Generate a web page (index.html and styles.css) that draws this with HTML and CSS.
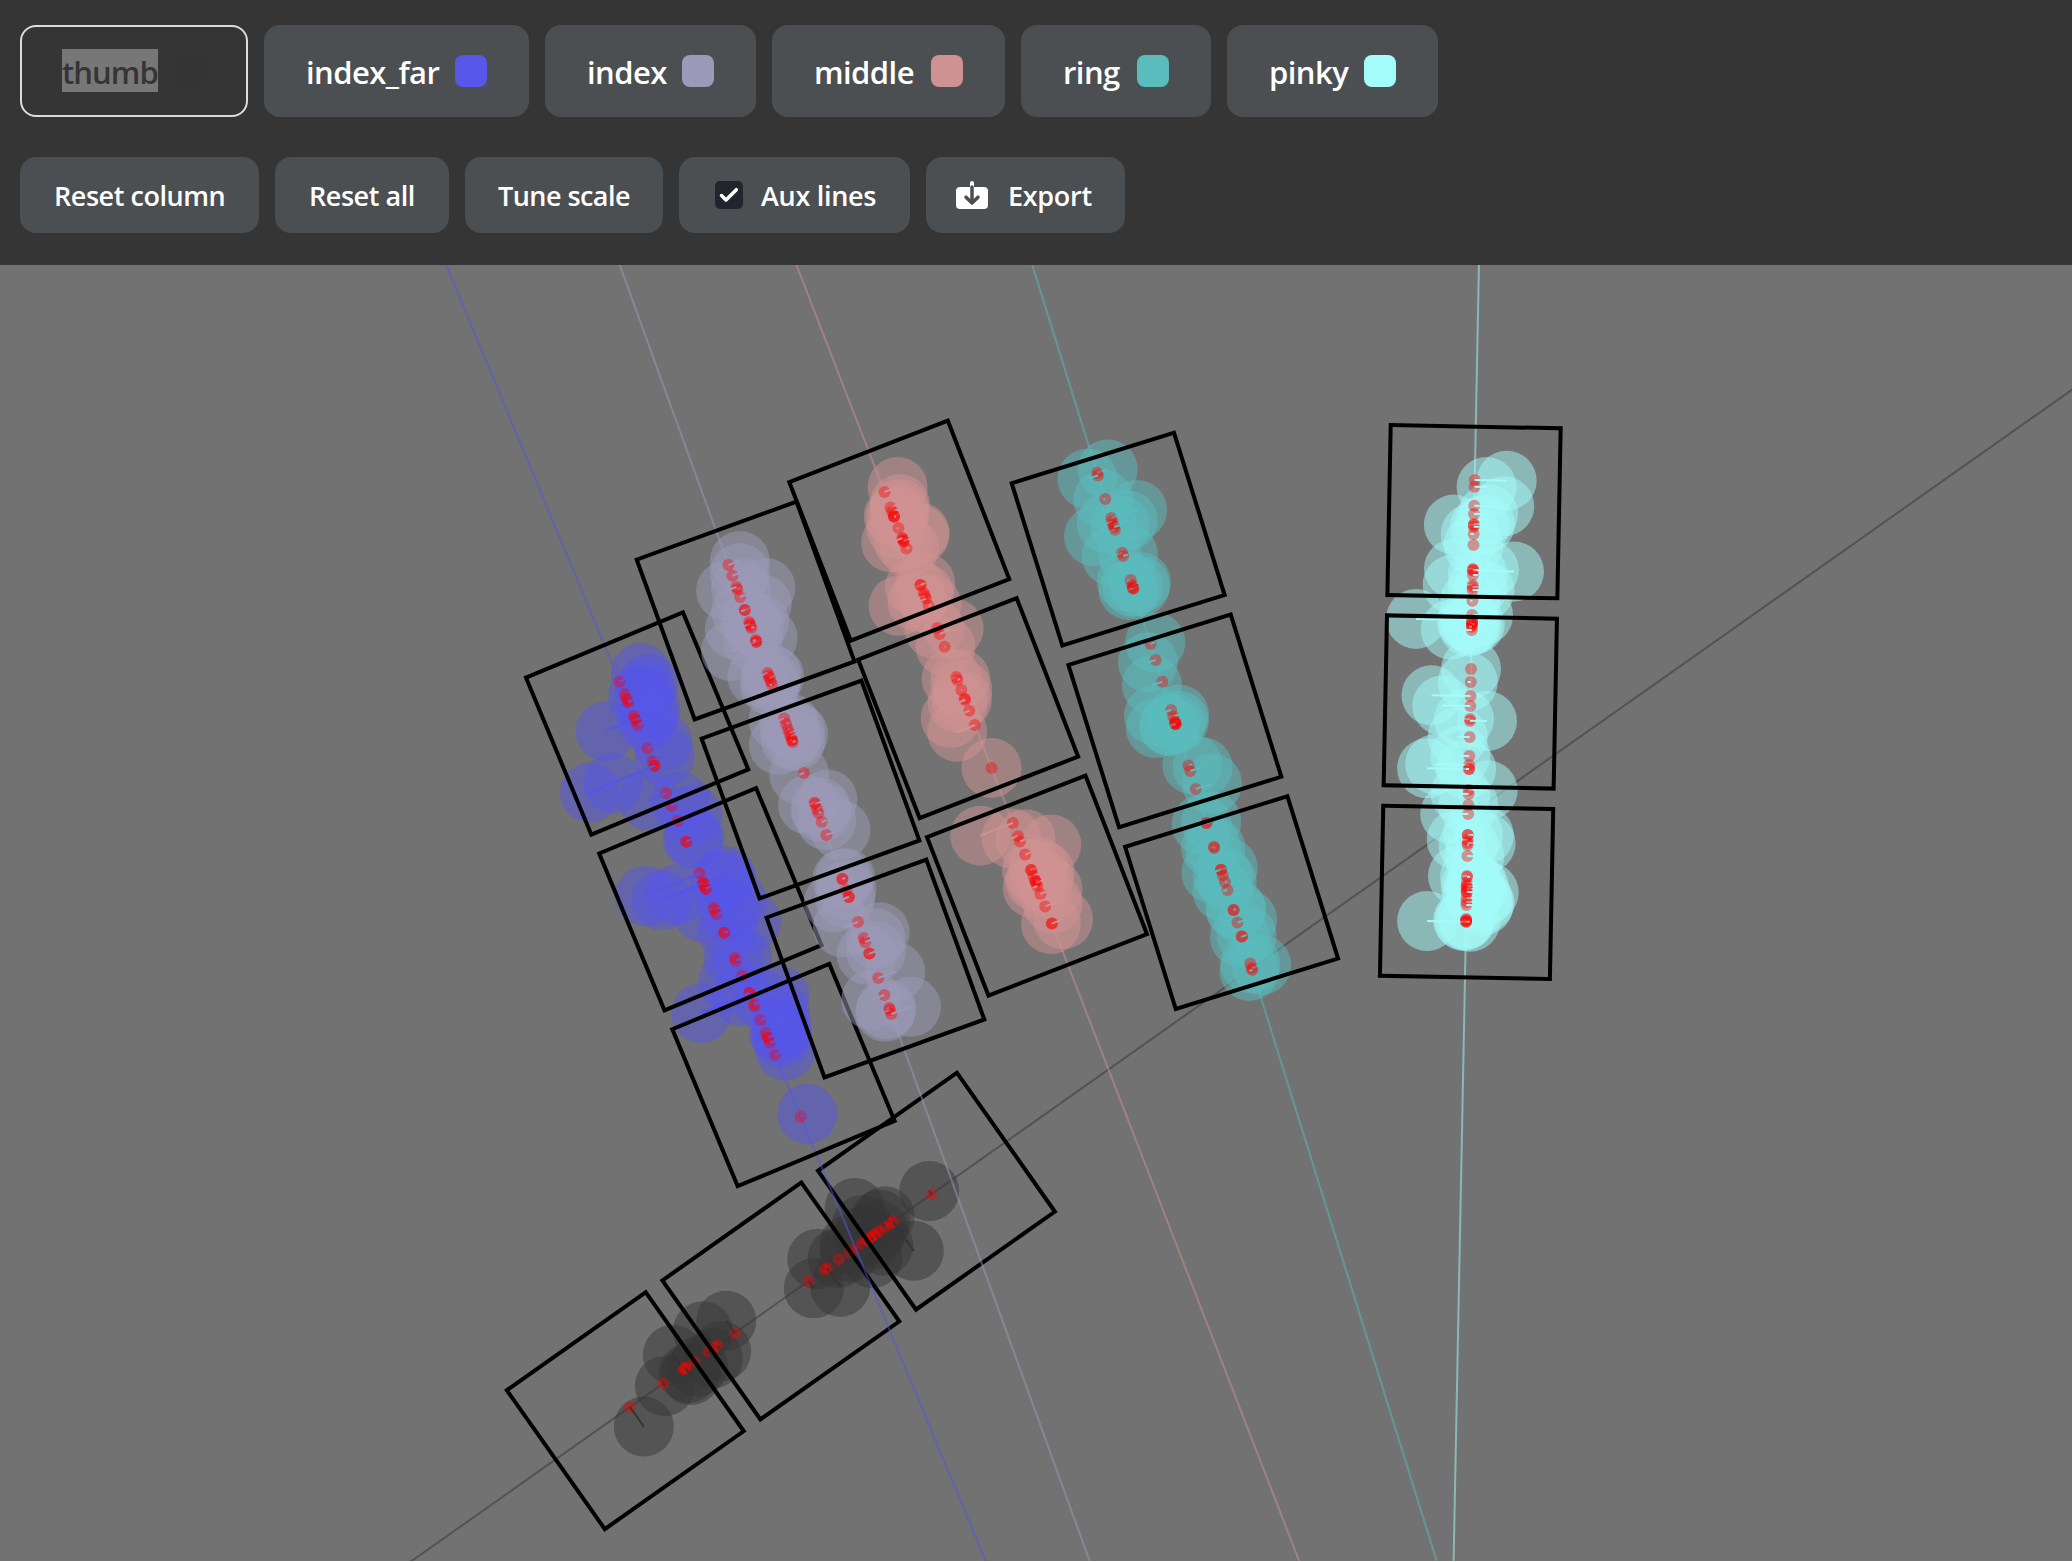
FILE: index.html
```html
<!DOCTYPE html>
<html lang="en">
<head>
<meta charset="utf-8">
<title>Finger columns</title>
<link rel="stylesheet" href="styles.css">
</head>
<body>
<header class="toolbar">
  <nav class="row fingers">
    <button class="finger thumb active"><span class="label">thumb</span><span class="swatch"></span></button>
    <button class="finger index-far"><span class="label">index_far</span><span class="swatch"></span></button>
    <button class="finger index"><span class="label">index</span><span class="swatch"></span></button>
    <button class="finger middle"><span class="label">middle</span><span class="swatch"></span></button>
    <button class="finger ring"><span class="label">ring</span><span class="swatch"></span></button>
    <button class="finger pinky"><span class="label">pinky</span><span class="swatch"></span></button>
  </nav>
  <div class="row actions">
    <button class="action reset-column"><span class="label">Reset column</span></button>
    <button class="action reset-all"><span class="label">Reset all</span></button>
    <button class="action tune"><span class="label">Tune scale</span></button>
    <button class="action aux"><svg class="check" viewBox="0 0 28 28"><rect width="28" height="28" rx="5"/><path d="M6.500 14.500 11 19 21.300 8.700"/></svg><span class="label">Aux lines</span></button>
    <button class="action export"><svg class="export-icon" viewBox="0 0 32 28"><rect class="tray" y="6" width="32" height="22" rx="4"/><path class="stem" d="M16 2V6"/><path class="arrow" d="M16 6V22M10 16.200L16 22 22 16.200"/></svg><span class="label">Export</span></button>
  </div>
</header>
<main class="board"><svg id="canvas" viewBox="0 265 2072 1296"></svg></main>
<script src="columns.js"></script>
</body>
</html>
```
FILE: styles.css
```css
* { box-sizing: border-box; }
body {
  margin: 0;
  background: #fff;
  font-family: "Open Sans", "Noto Sans", sans-serif;
  color: #fff;
}
.toolbar {
  display: flex;
  flex-direction: column;
  gap: 40px;
  height: 265px;
  padding: 25px 20px 0;
  background: #353535;
}
.row { display: flex; gap: 16px; }
button {
  display: flex;
  align-items: center;
  flex: none;
  border: 0;
  border-radius: 16px;
  background: #4b4f52;
  color: #fff;
  font-family: inherit;
  font-weight: 600;
  white-space: nowrap;
}
.finger {
  height: 92px;
  padding: 0 42px;
  justify-content: space-between;
  font-size: 31px;
  letter-spacing: -.55px;
}
.finger .label { line-height: 43px; padding-top: 3px; }
.swatch { width: 32px; height: 32px; border-radius: 8px; }
.thumb { width: 228px; letter-spacing: -.95px; }
.index-far { width: 265px; }
.index { width: 211px; }
.middle { width: 233px; }
.ring { width: 190px; }
.pinky { width: 211px; }
.active { border: 2px solid #dcdcdc; background: #353535; padding: 0 40px; color: #353535; }
.finger.active .label { background: #777; line-height: 39px; padding-top: 4px; margin-bottom: 1px; }
.thumb .swatch { background: #343434; }
.index-far .swatch { background: #5656e8; }
.index .swatch { background: #9c9ab8; }
.middle .swatch { background: #cf9292; }
.ring .swatch { background: #5abcbd; }
.pinky .swatch { background: #a4fcfa; }
.action { height: 76px; padding: 0 34px; font-size: 27px; letter-spacing: -.45px; }
.reset-column { width: 239px; }
.reset-all { width: 174px; }
.tune { width: 198px; letter-spacing: -.55px; padding-left: 33px; }
.aux { width: 231px; padding: 0 0 0 36px; gap: 18px; letter-spacing: -.3px; }
.export { width: 199px; padding: 0 0 0 30px; gap: 20px; letter-spacing: -.3px; }
.check { width: 28px; height: 28px; }
.check rect { fill: #22252d; }
.check path { fill: none; stroke: #fff; stroke-width: 3.500; stroke-linecap: round; stroke-linejoin: round; }
.export-icon { width: 32px; height: 28px; overflow: visible; }
.tray { fill: #fff; }
.stem { stroke: #fff; stroke-width: 4; stroke-linecap: round; }
.arrow { fill: none; stroke: #4b4f52; stroke-width: 3.500; stroke-linecap: round; stroke-linejoin: round; }
.board { background: #727272; height: 1296px; }
#canvas { display: block; width: 2072px; height: 1296px; }
.axis { stroke-width: 2; opacity: .5; }
.touch { opacity: .5; }
.dot { fill: #f00; opacity: .4; }
.offset { stroke-width: 2; }
.key { fill: none; stroke: #000; stroke-width: 4; }
```
FILE: columns.js
```js
// Each column: a point on its axis, its rotation in degrees, the corner of its
// first key, and touches as [y of the point on the axis, offset across the axis].
const KEY = 170, PITCH = 190.4, RADIUS = 30;
const columns = [
  { color: '#353535', at: [931.5, 1194.3], angle: 54.8, corner: [956.9, 1072.7], touches: [
    [1194.3,-4],[1235,-33],[1223.6,-9],[1221.4,36],[1237.4,-15],[1227,-9],[1231.4,-2],[1234,14],[1243.4,18],
    [1250,-6],[1259.6,-2],[1269.6,-13],[1281,9],[1268,23],[1240.4,-5],[1252,0],[1237,3],[1333,-15],[1347.5,-20],
    [1345.5,7],[1351.7,8],[1369.4,-18],[1367.7,9],[1383.6,3],[1407,24],[1368,6],[1361.6,6]] },
  { color: '#5555e8', at: [581.5, 590], angle: -22.6, corner: [526, 677.7], touches: [
    [681.7,23],[694,26],[698,20],[701,11],[702.3,17],[716,18],[719,-32],[720,14],[725,10],[748.3,16],[761,13],
    [765.7,-70],[765.7,-45],[793,-19],[805.7,10],[821,16],[841.7,7],[841.7,9],[873.3,-59],[883,-45],[883,-30],
    [885,23],[889.3,22],[888.3,16],[908,-12],[910,24],[914.3,12],[932.7,29],[932.7,4],[958,-1],[960.7,7],
    [975.7,-15],[993,-52],[993,-8],[1006,27],[1004,10],[1020,21],[1033,17],[1037,14],[1038,12],[1042.7,13],
    [1055,11],[1116.7,7]] },
  { color: '#9c9ab8', at: [701.3, 490], angle: -19.93, corner: [636.7, 559.6], touches: [
    [565,12],[575.7,8],[597,27],[589.3,4],[587,-11],[610,18],[610,-4],[622,2],[625.7,9],[624,-16],[628,3],
    [641.8,12],[641.8,-27],[640,-3],[675.7,3],[673,-11],[678,5],[681,0],[684.6,-2],[718.6,-6],[724,3],[729,2],
    [740,-14],[733,6],[736.4,8],[740,-1],[742,3],[773,-5],[802.5,-7],[804,13],[809,4],[813,3],[822,5],[835,15],
    [879,0],[879,3],[897,-4],[897,-16],[890,0],[922,-16],[938,17],[942,11],[953.6,-3],[953.6,7],[978,18],
    [995,-14],[1008,-3],[1010,-5],[1014,21]] },
  { color: '#cf9292', at: [852.7, 410], angle: -21.2, corner: [789.3, 482.1], touches: [
    [492,14],[507.5,10],[511.8,8],[516,6],[516,0],[517,2],[528,-2],[539,18],[541.4,0],[541,17],[548.6,3],
    [538,-12],[585,-6],[585,5],[593,0],[595.7,-28],[598.6,-9],[605.7,3],[627.9,-3],[634,15],[646.8,1],[677,-5],
    [680,3],[690,1],[698.6,-3],[700,-8],[710.7,-20],[725,-19],[767.9,0],[823,-35],[836,-7],[841.4,6],[854.6,28],
    [870,8],[870,1],[876,12],[881,0],[881,3],[883,8],[886,-5],[894,13],[906.4,8],[923.6,-1],[923.6,12]] },
  { color: '#5abcbd', at: [1080.7, 420], angle: -17.33, corner: [1011.7, 483.3], touches: [
    [472.8,11],[475.5,-11],[499,-2],[518,27],[521.4,-6],[525,15],[529.8,-22],[527,6],[552.8,-11],[556,5],
    [580,-4],[585,9],[588.4,7],[588.4,-5],[587,0],[643.9,5],[660,-8],[681.8,-11],[710,-18],[716.6,6],[722,-20],
    [722,4],[724,-7],[724,-6],[724,0],[765.6,4],[771,13],[788.9,17],[823,-5],[823,5],[846.7,-3],[848,1],
    [869.7,7],[869.7,-10],[875.4,0],[882,2],[890,-5],[909.9,3],[909.9,2],[922.5,10],[936.6,-2],[936.6,5],
    [963.4,0],[968,10],[970,-3]] },
  { color: '#a4fcfa', at: [1476.1, 410], angle: 1.12, corner: [1390.7, 425], touches: [
    [480,32],[486.7,12],[505.7,30],[514,14],[525,-20],[524,11],[526.7,6],[534,-3],[545,0],[569,-19],[570.7,41],
    [570,16],[575,5],[585,-20],[587,5],[590,12],[600.7,-2],[615,11],[620,-56],[621.7,-5],[623,-2],[624,3],
    [625,0],[626.7,-3],[630,-21],[669,0],[682,-3],[696,-39],[706,-28],[719,-6],[720.7,17],[737,-12],[756,-9],
    [765,-34],[769,-42],[769,-3],[790,19],[794,-8],[805,0],[814,-18],[835,16],[835,5],[840,-11],[843,18],[845,1],
    [856,7],[876,-9],[877,3],[883,9],[886,12],[887,4],[889,8],[892,22],[892,6],[898,16],[902,18],[905,17],
    [920,-3],[921,-2],[921.7,-39],[921.7,4],[919,0]] }
];
const svg = document.getElementById('canvas');
function add(name, attrs) {
  const el = document.createElementNS('http://www.w3.org/2000/svg', name);
  for (const k in attrs) el.setAttribute(k, attrs[k]);
  svg.appendChild(el);
}
for (const { color, at, angle, corner, touches } of columns) {
  const a = angle * Math.PI / 180, cos = Math.cos(a), sin = Math.sin(a);
  const axisX = y => at[0] - (y - at[1]) * sin / cos;
  add('line', { class: 'axis', stroke: color, x1: axisX(0), y1: 0, x2: axisX(1700), y2: 1700 });
  const points = touches.map(([y, d]) => ({ x: axisX(y), y, cx: axisX(y) + d * cos, cy: y + d * sin }));
  for (const p of points) add('circle', { class: 'touch', fill: color, cx: p.cx, cy: p.cy, r: RADIUS });
  for (const p of points) {
    add('circle', { class: 'dot', cx: p.x, cy: p.y, r: 6 });
    add('line', { class: 'offset', stroke: color, x1: p.x, y1: p.y, x2: p.cx, y2: p.cy });
  }
  for (let i = 0; i < 3; i++) {
    add('rect', { class: 'key', y: i * PITCH, width: KEY, height: KEY,
      transform: `translate(${corner}) rotate(${angle})` });
  }
}
```
